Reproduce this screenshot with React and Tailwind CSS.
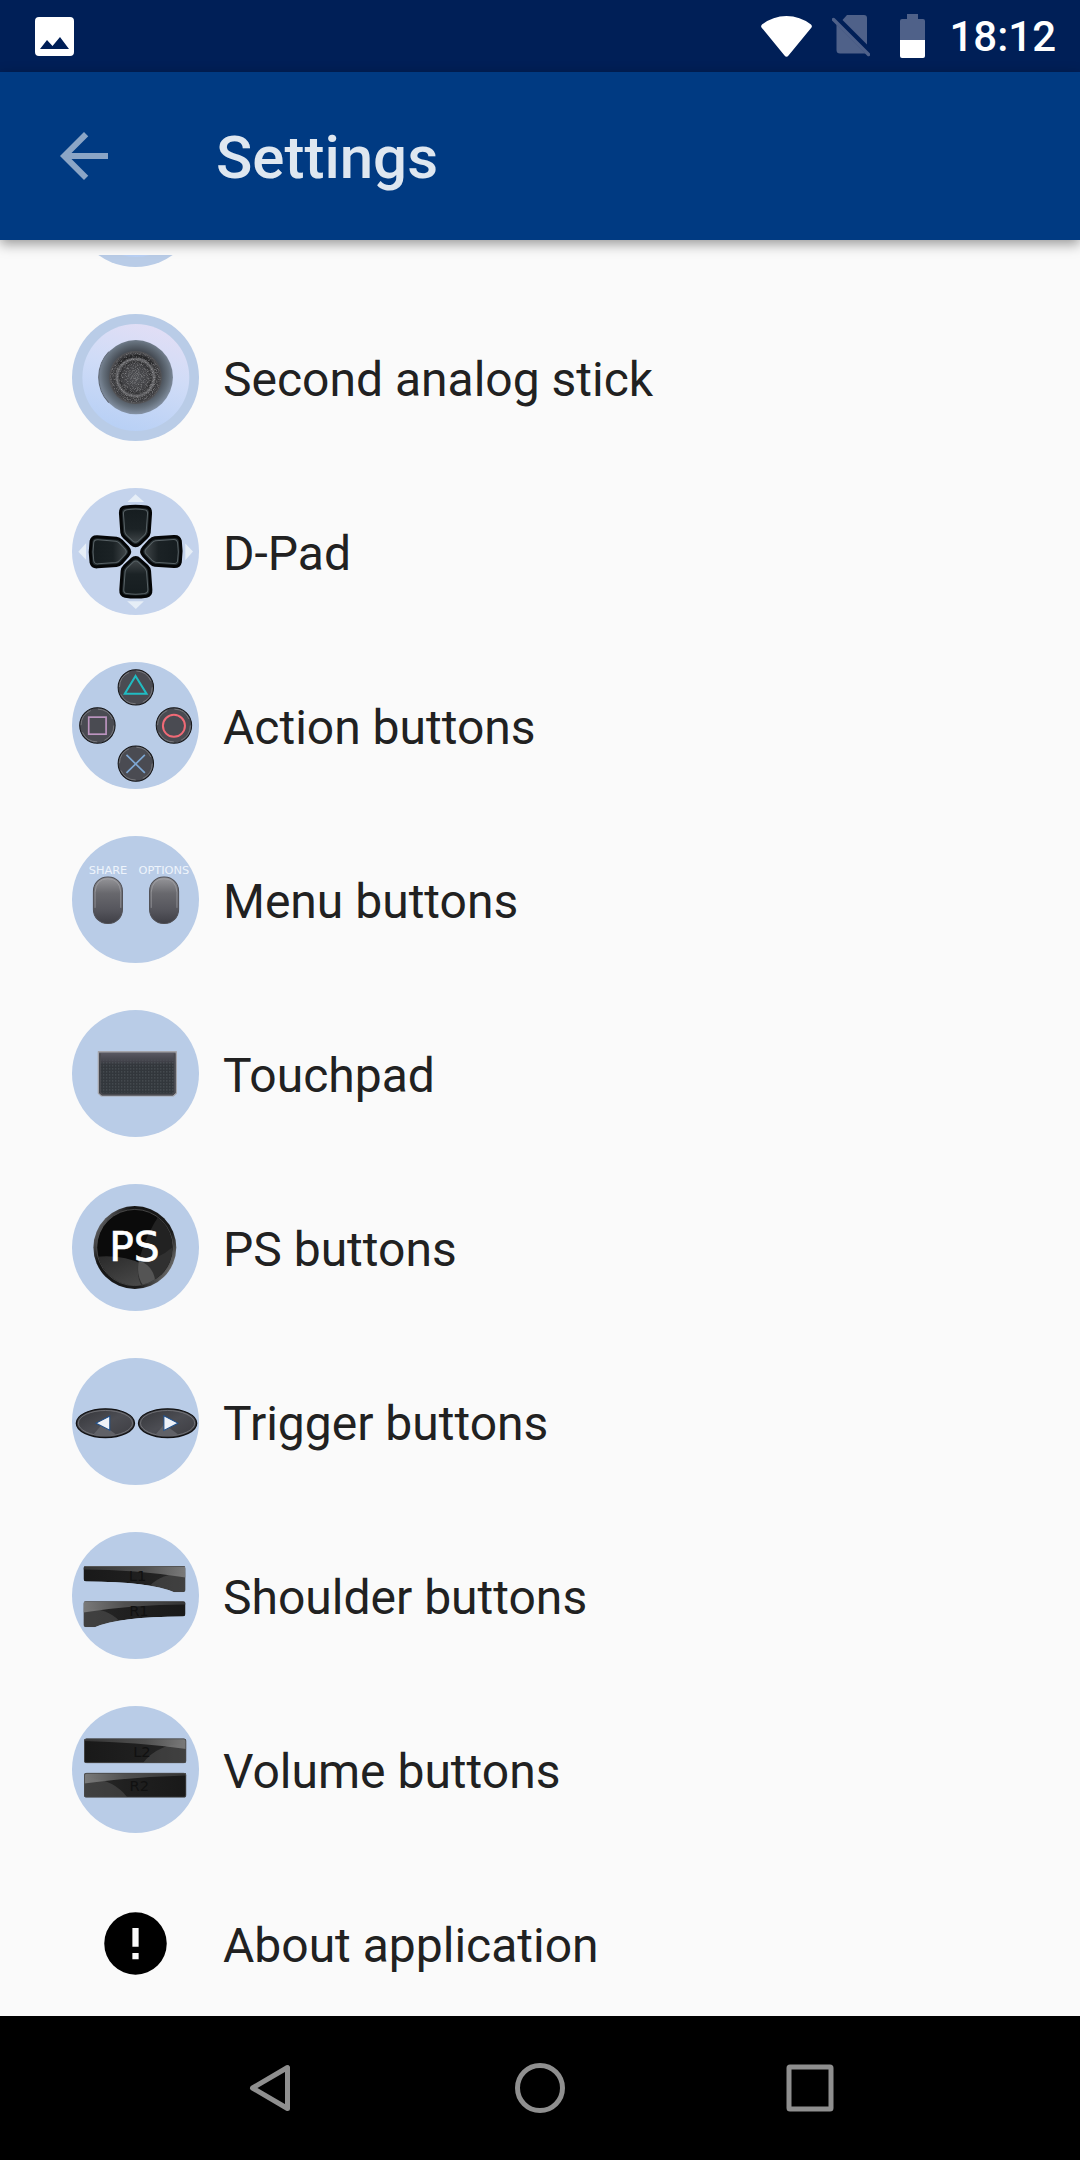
import React, { useLayoutEffect, useRef } from 'react';

const DISC = '#b9cce7';

function Disc({ color = DISC, children }) {
  return (
    <svg viewBox="0 0 380 380" className="size-full" aria-hidden="true">
      <circle cx="190" cy="190" r="190" fill={color} />
      {children}
    </svg>
  );
}

function AnalogIcon({ id }) {
  return (
    <Disc>
      <defs>
        <linearGradient id={`${id}-base`} x1="0.7" y1="0" x2="0.4" y2="1">
          <stop offset="0" stopColor="#e2def5" />
          <stop offset="0.45" stopColor="#d0dcf7" />
          <stop offset="1" stopColor="#b8d0f5" />
        </linearGradient>
        <radialGradient id={`${id}-well`} cx="0.5" cy="0.47" r="0.55">
          <stop offset="0.6" stopColor="#454b53" />
          <stop offset="0.8" stopColor="#65707c" />
          <stop offset="1" stopColor="#8c9aae" />
        </radialGradient>
        <radialGradient id={`${id}-stick`}>
          <stop offset="0" stopColor="#505155" />
          <stop offset="0.5" stopColor="#404043" />
          <stop offset="0.6" stopColor="#303032" />
          <stop offset="0.7" stopColor="#6c6c6f" />
          <stop offset="0.78" stopColor="#3a3a3c" />
          <stop offset="0.9" stopColor="#3c3c3f" />
          <stop offset="1" stopColor="#555558" />
        </radialGradient>
        <filter id={`${id}-grain`}>
          <feTurbulence type="fractalNoise" baseFrequency="0.4" numOctaves="2" />
          <feColorMatrix values="0 0 0 0 0.6  0 0 0 0 0.6  0 0 0 0 0.61  1.2 0 0 0 -0.55" />
          <feComposite in2="SourceGraphic" operator="in" />
        </filter>
      </defs>
      <circle cx="191" cy="190" r="160" fill={`url(#${id}-base)`} />
      <circle cx="191" cy="189" r="111" fill={`url(#${id}-well)`} />
      <path d="M110 113a111 111 0 0 0 0 152" fill="none" stroke="#5c6470" strokeWidth="3" />
      <circle cx="190" cy="190" r="79" fill={`url(#${id}-stick)`} />
      <path d="M140 150a64 64 0 0 1 100 0" fill="none" stroke="#262628" strokeWidth="9" />
      <circle cx="190" cy="190" r="76" filter={`url(#${id}-grain)`} />
    </Disc>
  );
}

function DPadIcon() {
  const petal =
    'M158 57Q190 52 222 57Q236 60 235 76L231 133Q230 141 223 148L203 167Q190 178 178 167L157 148Q150 141 149 133L145 76Q144 60 158 57Z';
  return (
    <Disc color="#c4d3ec">
      <defs>
        <linearGradient id="petal" x1="0" y1="0" x2="0" y2="1">
          <stop offset="0" stopColor="#161d20" />
          <stop offset="0.6" stopColor="#1b2225" />
          <stop offset="1" stopColor="#3f4548" />
        </linearGradient>
      </defs>
      {[0, 90, 180, 270].map((angle) => (
        <g key={angle} transform={`rotate(${angle} 190.500 190.500)`}>
          <path d="M190 19L166 42H216Z" fill="#e6eef7" />
          <path d={petal} fill="#20282b" stroke="#050607" strokeWidth="9" />
          <path d="M164 65Q190 61 217 65Q227 66 226 78L222 131Q221 137 216 142L198 159Q190 166 182 159L164 142Q159 137 158 131L154 78Q153 67 164 65Z" fill="url(#petal)" stroke="#596266" strokeWidth="3" />
        </g>
      ))}
    </Disc>
  );
}

function ActionIcon() {
  const centers = [[191, 76], [76, 190], [305, 190], [191, 304]];
  return (
    <Disc>
      {centers.map(([x, y]) => (
        <g key={`${x}-${y}`}>
          <circle cx={x} cy={y} r="53" fill="#4a4b52" stroke="#151517" strokeWidth="3" />
          <circle cx={x} cy={y} r="49" fill="none" stroke="#8d8d90" strokeWidth="2" strokeDasharray="55 22" />
        </g>
      ))}
      <g fill="none" strokeWidth="5">
        <path d="M190 42L158 95H223Z" stroke="#20bcc2" strokeWidth="6" />
        <rect x="50" y="165" width="52" height="51" stroke="#bd95c0" />
        <circle cx="305" cy="191" r="33" stroke="#f06a76" strokeWidth="6" />
        <path d="M163 278L218 332M218 278L163 332" stroke="#7da6d2" />
      </g>
    </Disc>
  );
}

function MenuIcon() {
  return (
    <Disc>
      <defs>
        <linearGradient id="pill" x1="0" y1="0" x2="0" y2="1">
          <stop offset="0" stopColor="#97979b" />
          <stop offset="0.35" stopColor="#68686d" />
          <stop offset="0.7" stopColor="#56565d" />
          <stop offset="1" stopColor="#3f3f46" />
        </linearGradient>
      </defs>
      <g fill="#eef4fc" fontFamily="'DejaVu Sans', sans-serif" fontSize="34">
        <text x="50" y="114">SHARE</text>
        <text x="199" y="114">OPTIONS</text>
      </g>
      {[64, 232].map((x) => (
        <g key={x}>
          <rect x={x} y="123" width="87" height="139" rx="42" fill="url(#pill)" stroke="#505056" strokeWidth="3" />
          <path d={`M${x + 5} 215V168Q${x + 8} 128 ${x + 43} 128Q${x + 79} 128 ${x + 82} 168V215`} fill="none" stroke="#a5a5a9" strokeWidth="2" />
        </g>
      ))}
    </Disc>
  );
}

function TouchpadIcon() {
  return (
    <Disc>
      <defs>
        <linearGradient id="pad" x1="0" y1="0" x2="0" y2="1">
          <stop offset="0" stopColor="#5c5b65" />
          <stop offset="0.2" stopColor="#44444c" />
          <stop offset="0.3" stopColor="#32363b" />
          <stop offset="1" stopColor="#33383d" />
        </linearGradient>
        <pattern id="dots" width="9" height="9" patternUnits="userSpaceOnUse">
          <rect x="3" y="3" width="3" height="4" fill="#555a60" />
        </pattern>
      </defs>
      <path d="M79 125H312V249L303 257H88L79 249Z" fill="url(#pad)" stroke="#a4a4aa" strokeWidth="4" strokeLinejoin="round" />
      <path d="M84 130V247L91 253H300L307 247V130" fill="none" stroke="#4a4a50" strokeWidth="5" />
      <rect x="86" y="149" width="219" height="98" fill="url(#dots)" />
    </Disc>
  );
}

function PSIcon() {
  return (
    <Disc>
      <defs>
        <linearGradient id="ps-rim" x1="0" y1="0.2" x2="1" y2="0.8">
          <stop offset="0" stopColor="#77777a" />
          <stop offset="0.25" stopColor="#151515" />
          <stop offset="0.75" stopColor="#1c1c1c" />
          <stop offset="1" stopColor="#858585" />
        </linearGradient>
        <linearGradient id="ps-low" x1="0" y1="0" x2="0.8" y2="1">
          <stop offset="0" stopColor="#292929" />
          <stop offset="1" stopColor="#4c4c4c" />
        </linearGradient>
        <clipPath id="ps-clip">
          <circle cx="188" cy="190" r="113" />
        </clipPath>
      </defs>
      <circle cx="188" cy="190" r="124" fill="url(#ps-rim)" />
      <circle cx="188" cy="190" r="114" fill="#0b0b0b" stroke="#5e5e5e" strokeWidth="2" />
      <g clipPath="url(#ps-clip)">
        <path d="M270 80Q220 150 200 230L310 310V80Z" fill="#222" />
        <path d="M70 218Q150 210 210 240Q250 258 252 310H70Z" fill="url(#ps-low)" />
        <path d="M200 228Q190 280 212 310H310V180Q260 230 200 228Z" fill="#303030" />
        <path d="M200 230Q246 244 250 298L212 302Q192 274 200 230Z" fill="#545454" />
      </g>
      <text x="187" y="229" textAnchor="middle" fill="#fff" stroke="#fff" strokeWidth="2" fontFamily="'DejaVu Sans', sans-serif" fontSize="122">PS</text>
    </Disc>
  );
}

function TriggerIcon() {
  return (
    <Disc>
      <defs>
        <linearGradient id="oval" x1="0" y1="0" x2="1" y2="1">
          <stop offset="0" stopColor="#333438" />
          <stop offset="0.5" stopColor="#4c4d53" />
          <stop offset="1" stopColor="#3c3c41" />
        </linearGradient>
      </defs>
      {[100, 286].map((x) => (
        <g key={x}>
          <ellipse cx={x} cy="195" rx="87" ry="43" fill="url(#oval)" stroke="#111113" strokeWidth="4" />
          <ellipse cx={x} cy="195" rx="81" ry="38" fill="none" stroke="#85868a" strokeWidth="2" />
          <path d={`M${x - 10} 198L${x - 36} 229Q${x} 238 ${x + 32} 229Z`} fill="#606167" />
        </g>
      ))}
      <path d="M72 195L113 174V216ZM275 173L317 195L275 217Z" fill="#eef2f8" stroke="#1d4f8c" strokeWidth="3" />
    </Disc>
  );
}

function BarGradients({ id }) {
  return (
    <defs>
      <linearGradient id={`${id}-dark`}>
        <stop offset="0" stopColor="#191919" />
        <stop offset="0.6" stopColor="#202020" />
        <stop offset="1" stopColor="#2a2a2a" />
      </linearGradient>
      <linearGradient id={`${id}-gloss`}>
        <stop offset="0" stopColor="#343434" />
        <stop offset="0.6" stopColor="#505050" />
        <stop offset="1" stopColor="#7a7a7a" />
      </linearGradient>
    </defs>
  );
}

function ShoulderIcon() {
  const left = 'M42 102H333Q340 102 340 109V172Q340 180 332 180H306Q230 148 42 148Q34 148 34 139V110Q34 102 42 102Z';
  return (
    <Disc>
      <BarGradients id="l1" />
      <clipPath id="l1-clip">
        <path d={left} />
      </clipPath>
      <g id="l1-bar" clipPath="url(#l1-clip)">
        <path d={left} fill="url(#l1-dark)" />
        <path d="M34 100H340V136Q190 112 34 112Z" fill="url(#l1-gloss)" />
        <path d="M234 160Q268 124 340 122V182H234Z" fill="#777" opacity="0.3" />
        <path d="M34 103H340" stroke="#555" strokeWidth="3" />
      </g>
      {/* the right bar is the left one mirrored */}
      <use href="#l1-bar" transform="matrix(-1 0 0 1 374 105)" />
      <g fill="#111" fontFamily="'DejaVu Sans', sans-serif" fontSize="44">
        <text x="170" y="147">L1</text>
        <text x="171" y="252">R1</text>
      </g>
    </Disc>
  );
}

function VolumeIcon() {
  return (
    <Disc>
      <BarGradients id="l2" />
      <clipPath id="l2-clip">
        <rect x="36" y="97" width="306" height="74" rx="8" />
      </clipPath>
      <g id="l2-bar" clipPath="url(#l2-clip)">
        <rect x="36" y="97" width="306" height="74" fill="url(#l2-dark)" />
        <path d="M36 97H342V129Q190 108 36 105Z" fill="url(#l2-gloss)" />
        <path d="M212 171Q256 112 342 112V171Z" fill="#777" opacity="0.3" />
        <rect x="37" y="98" width="304" height="72" rx="7" fill="none" stroke="#4a4a4a" strokeWidth="3" />
      </g>
      <use href="#l2-bar" transform="matrix(-1 0 0 1 378 103)" />
      <g fill="#111" fontFamily="'DejaVu Sans', sans-serif" fontSize="44">
        <text x="183" y="152">L2</text>
        <text x="172" y="255">R2</text>
      </g>
    </Disc>
  );
}

function AboutIcon() {
  return (
    <svg viewBox="0 0 24 24" className="size-[75px]" aria-hidden="true">
      <path d="M12 2a10 10 0 1 0 0 20a10 10 0 1 0 0-20zm1 15h-2v-2h2v2zm0-4h-2V7h2v6z" />
    </svg>
  );
}

const ITEMS = [
  { label: 'Second analog stick', icon: <AnalogIcon id="stick2" /> },
  { label: 'D-Pad', icon: <DPadIcon /> },
  { label: 'Action buttons', icon: <ActionIcon /> },
  { label: 'Menu buttons', icon: <MenuIcon /> },
  { label: 'Touchpad', icon: <TouchpadIcon /> },
  { label: 'PS buttons', icon: <PSIcon /> },
  { label: 'Trigger buttons', icon: <TriggerIcon /> },
  { label: 'Shoulder buttons', icon: <ShoulderIcon /> },
  { label: 'Volume buttons', icon: <VolumeIcon /> },
  { label: 'About application', icon: <AboutIcon /> },
];

function StatusBar() {
  return (
    <div className="flex h-[72px] shrink-0 items-center justify-between bg-[#001f57] pl-[35px] pr-6 text-white">
      <svg viewBox="0 0 39 39" className="size-[39px]" aria-hidden="true">
        <path fillRule="evenodd" fill="currentColor" d="M4 0H35Q39 0 39 4V35Q39 39 35 39H4Q0 39 0 35V4Q0 0 4 0ZM5 32H34L25 20L17.500 29L12 23Z" />
      </svg>
      <div className="flex items-center">
        <svg viewBox="0 0 51 41" className="mr-5 h-[41px] w-[51px]" aria-hidden="true">
          <path fill="currentColor" d="M1 8.500Q12 0 25.500 0Q39 0 50 8.500Q51.500 10 50.500 11.500L27.500 39.500Q25.500 42 23.500 39.500L.5 11.500Q-.5 10 1 8.500Z" />
        </svg>
        <svg viewBox="0 0 38 42" className="mr-[30px] h-[42px] w-[38px]" aria-hidden="true">
          <g fill="#4f6189">
            <path d="M15 0H32Q35 0 35 3V29.500L10.500 5Z" />
            <path d="M4.500 9.500L33.500 38.500H8Q4.500 38.500 4.500 35Z" />
          </g>
          <path d="M1.500 4.500L36.500 39.500" stroke="#4f6189" strokeWidth="3.500" strokeLinecap="round" />
        </svg>
        <svg viewBox="0 0 25 44" className="mr-6 h-11 w-[25px]" aria-hidden="true">
          <path fill="#4f6189" d="M7 0H18V5H23Q25 5 25 7V26H0V7Q0 5 2 5H7Z" />
          <path fill="currentColor" d="M0 26H25V42Q25 44 23 44H2Q0 44 0 42Z" />
        </svg>
        <span className="pt-0.5 text-[42px] leading-none font-medium">18:12</span>
      </div>
    </div>
  );
}

function ItemIcon({ children }) {
  return <span className="flex size-[127px] shrink-0 items-center justify-center">{children}</span>;
}

function NavBar() {
  return (
    <nav className="grid h-36 shrink-0 grid-cols-3 bg-black px-[12.5%] text-[#8f8f8f]">
      <button type="button" aria-label="Back" className="flex items-center justify-center">
        <svg viewBox="0 0 50 50" className="size-[50px]" fill="none" stroke="currentColor" strokeWidth="5" strokeLinejoin="round">
          <path d="M42.500 4.500V45.500L7.500 25Z" />
        </svg>
      </button>
      <button type="button" aria-label="Home" className="flex items-center justify-center">
        <svg viewBox="0 0 50 50" className="size-[50px]" fill="none" stroke="currentColor" strokeWidth="5">
          <circle cx="25" cy="25" r="22.500" />
        </svg>
      </button>
      <button type="button" aria-label="Recent apps" className="flex items-center justify-center">
        <svg viewBox="0 0 50 50" className="size-[50px]" fill="none" stroke="currentColor" strokeWidth="5" strokeLinejoin="round">
          <rect x="4" y="4" width="42" height="42" rx="1" />
        </svg>
      </button>
    </nav>
  );
}

function App() {
  const listRef = useRef(null);

  useLayoutEffect(() => {
    listRef.current.scrollTop = 139;
  }, []);

  return (
    <div className="flex h-screen flex-col bg-[#fafafa] font-[Roboto,sans-serif]">
      <StatusBar />
      <header className="relative z-10 flex h-[168px] shrink-0 items-center bg-[#003a82] pl-12 shadow-[0_4px_12px_rgba(0,0,0,0.4)]">
        <button type="button" aria-label="Navigate up" className="mr-24 text-[#8ba5c6]">
          <svg viewBox="0 0 24 24" className="size-[72px]" fill="currentColor">
            <path d="M20 11H7.830l5.590-5.590L12 4l-8 8 8 8 1.410-1.410L7.830 13H20v-2z" />
          </svg>
        </button>
        <h1 className="pt-1 text-[60px] leading-none font-medium text-[#dfe7f0]">Settings</h1>
      </header>
      <main className="flex min-h-0 flex-1 flex-col pt-[15px]">
        <ul ref={listRef} className="min-h-0 flex-1 overflow-y-auto [scrollbar-width:none]">
          <li>
            <button type="button" aria-label="Analog stick" className="flex h-[174px] w-full items-center px-[72px]">
              <ItemIcon>
                <AnalogIcon id="stick1" />
              </ItemIcon>
            </button>
          </li>
          {ITEMS.map((item) => (
            <li key={item.label}>
              <button type="button" className="flex h-[174px] w-full items-center gap-6 px-[72px] text-left">
                <ItemIcon>{item.icon}</ItemIcon>
                <span className="pt-1.5 text-5xl text-[#212121]">{item.label}</span>
              </button>
            </li>
          ))}
        </ul>
      </main>
      <NavBar />
    </div>
  );
}

export default App;
